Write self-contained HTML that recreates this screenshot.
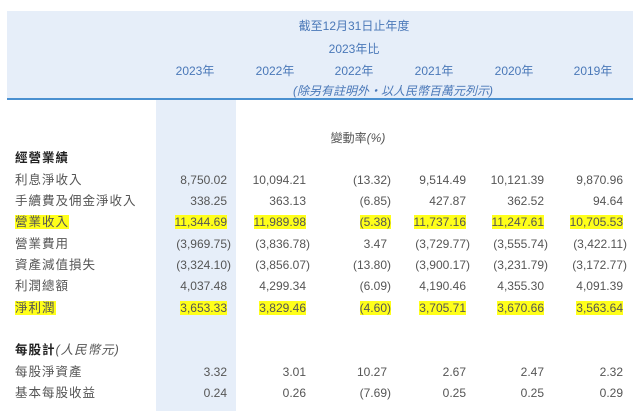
<!DOCTYPE html>
<html><head><meta charset="utf-8"><style>
body{margin:0;width:640px;height:411px;background:#fff;position:relative;overflow:hidden;font-family:"Liberation Sans","Noto Sans CJK TC",sans-serif;color:#555;font-size:12px}
.band{position:absolute;left:7px;top:11px;width:626px;height:87px;background:#e6eef9}
.line{position:absolute;left:7px;top:98px;width:626px;height:2px;background:#4a90d0}
.col{position:absolute;left:156px;top:100px;width:80px;height:311px;background:#e6eef9}
.h{position:absolute;color:#4a78b8;font-size:12px;transform:translateX(-50%);white-space:nowrap}
.r{position:absolute;white-space:nowrap;line-height:15px}
.l{position:absolute;left:15px;white-space:nowrap;letter-spacing:1px;font-size:12.5px;line-height:15px}
.n{position:absolute;white-space:nowrap;text-align:right;line-height:15px}
.y{background:#ffff1a}
.b{font-weight:bold;color:#222}
</style></head><body>
<div class="band"></div><div class="line"></div><div class="col"></div>
<div class="h" style="left:354px;top:17px">截至12月31日止年度</div>
<div class="h" style="left:354px;top:40px">2023年比</div>
<div class="h" style="left:195px;top:62px">2023年</div>
<div class="h" style="left:275px;top:62px">2022年</div>
<div class="h" style="left:354px;top:62px">2022年</div>
<div class="h" style="left:434px;top:62px">2021年</div>
<div class="h" style="left:514px;top:62px">2020年</div>
<div class="h" style="left:593px;top:62px">2019年</div>
<div class="h" style="left:393px;top:82px;font-style:italic">(除另有註明外・以人民幣百萬元列示)</div>
<div class="h" style="left:358px;top:129px;color:#555">變動率<i>(%)</i></div>
<div id="t"></div>
<script>
var rows=[
[151,'經營業績',null,1],
[173,'利息淨收入',['8,750.02','10,094.21','(13.32)','9,514.49','10,121.39','9,870.96']],
[194,'手續費及佣金淨收入',['338.25','363.13','(6.85)','427.87','362.52','94.64']],
[215,'營業收入',['11,344.69','11,989.98','(5.38)','11,737.16','11,247.61','10,705.53'],0,1],
[237,'營業費用',['(3,969.75)','(3,836.78)','3.47','(3,729.77)','(3,555.74)','(3,422.11)']],
[258,'資產減值損失',['(3,324.10)','(3,856.07)','(13.80)','(3,900.17)','(3,231.79)','(3,172.77)']],
[279,'利潤總額',['4,037.48','4,299.34','(6.09)','4,190.46','4,355.30','4,091.39']],
[301,'淨利潤',['3,653.33','3,829.46','(4.60)','3,705.71','3,670.66','3,563.64'],0,1],
[343,'每股計',null,2],
[365,'每股淨資產',['3.32','3.01','10.27','2.67','2.47','2.32']],
[386,'基本每股收益',['0.24','0.26','(7.69)','0.25','0.25','0.29']]];
var R=[227,306,387,466,544,623],h='';
rows.forEach(function(r){
 var lab=r[1];
 if(r[3]==1)lab='<span class="b">'+lab+'</span>';
 if(r[3]==2)lab='<span class="b">'+lab+'</span><i>(人民幣元)</i>';
 if(r[4])lab='<span class="y">'+lab+'</span>';
 h+='<div class="l" style="top:'+r[0]+'px">'+lab+'</div>';
 if(r[2])r[2].forEach(function(v,i){
  var p=v.slice(-1)==')',right=640-R[i]-(p?4:0);
  h+='<div class="n" style="top:'+r[0]+'px;right:'+right+'px"><span'+(r[4]?' class="y"':'')+'>'+v+'</span></div>';
 });
});
document.getElementById('t').innerHTML=h;
</script>
</body></html>
